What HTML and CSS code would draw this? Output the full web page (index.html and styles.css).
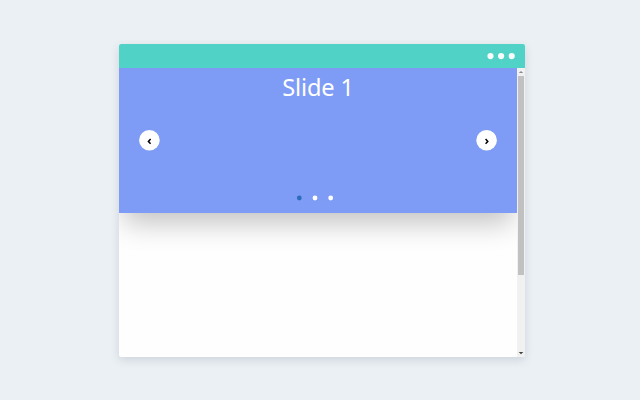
FILE: index.html
```html
<!DOCTYPE html>
<html lang="en">
<head>
<meta charset="utf-8">
<title>Slider</title>
<link rel="stylesheet" href="styles.css">
</head>
<body>
<main class="window">
  <header class="titlebar">
    <svg width="30" height="8" viewBox="0 0 30 8" fill="#f8fcfc"><circle cx="4.5" cy="4.1" r="3.1"/><circle cx="15.1" cy="4.1" r="3.1"/><circle cx="25.7" cy="4.1" r="3.1"/></svg>
  </header>
  <div class="viewport">
    <div class="content">
      <section class="slide">
        <h1>Slide 1</h1>
        <div class="controls">
          <button class="arrow" aria-label="Previous"><svg viewBox="0 0 22 22"><circle cx="10.4" cy="10.3" r="10.3"/><path d="M11.6 9 9.4 11.4 11.6 13.8"/></svg></button>
          <button class="arrow" aria-label="Next"><svg viewBox="0 0 22 22"><circle cx="11.6" cy="10.3" r="10.3"/><path d="M10.6 9 12.8 11.4 10.6 13.8"/></svg></button>
        </div>
        <nav class="dots">
          <svg width="40" height="6" viewBox="0 0 40 6"><circle class="active" cx="4.3" cy="3" r="2.4"/><circle cx="20" cy="3" r="2.4"/><circle cx="35.7" cy="3" r="2.4"/></svg>
        </nav>
      </section>
    </div>
    <aside class="scrollbar">
      <svg class="tip" viewBox="0 0 8 8"><path fill="#8c8c8c" d="M1.8 5 4 3 6.2 5z"/></svg>
      <div class="thumb"></div>
      <svg class="tip bottom" viewBox="0 0 8 8"><path fill="#404040" d="M1.7 3 6.3 3 4 5.2z"/></svg>
    </aside>
  </div>
</main>
</body>
</html>
```
FILE: styles.css
```css
* { box-sizing: border-box; }
body {
  margin: 0;
  height: 400px;
  padding: 44px 0 0 119px;
  background: #ebf0f4;
  font-family: "Noto Sans", "Open Sans", sans-serif;
}
.window {
  width: 406px;
  height: 313.4px;
  border-radius: 2px;
  overflow: hidden;
  background: #fefefe;
  box-shadow: 0 3px 8px rgba(60, 80, 100, .17);
}
.titlebar {
  height: 24px;
  padding-right: 9px;
  display: flex;
  justify-content: flex-end;
  align-items: center;
  background: #50d2c6;
}
.titlebar svg { display: block; }
.viewport { display: flex; height: 289px; }
.content { width: 398px; overflow: hidden; }
.slide {
  height: 145px;
  display: flex;
  flex-direction: column;
  background: #7e9cf5;
  color: #fff;
  box-shadow: 0 15px 26px -5px rgba(0, 0, 0, .24);
}
h1 {
  margin: 0;
  height: 62px;
  padding-top: 3px;
  font-size: 23.6px;
  font-weight: 400;
  line-height: 33px;
  letter-spacing: -.15px;
  text-align: center;
}
.controls {
  height: 22px;
  padding: 0 20px;
  display: flex;
  justify-content: space-between;
}
.arrow {
  width: 22px;
  height: 22px;
  padding: 0;
  border: 0;
  background: none;
}
.arrow svg {
  display: block;
  width: 22px;
  height: 22px;
}
.arrow circle { fill: #fff; }
.arrow path {
  fill: none;
  stroke: #000;
  stroke-width: 1.5;
}
.dots {
  display: flex;
  justify-content: center;
  padding: 43px 6px 0 0;
}
.dots circle { fill: #fff; }
.dots .active { fill: #2c6cb8; }
.scrollbar {
  width: 8px;
  display: flex;
  flex-direction: column;
  background: #f1f1f1;
}
.tip { display: block; width: 8px; height: 8px; }
.bottom { margin-top: auto; }
.thumb {
  height: 199px;
  margin: 0 1px;
  background: #c1c1c1;
}
```
